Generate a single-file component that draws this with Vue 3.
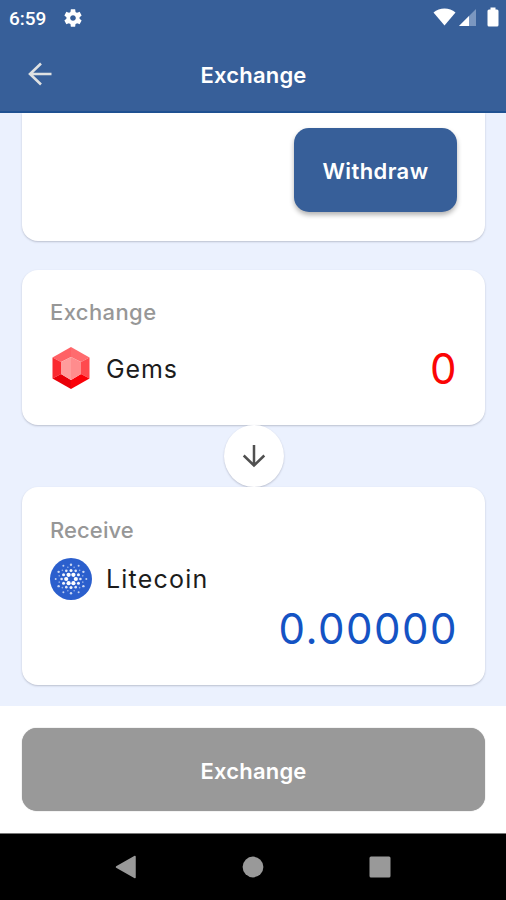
<template>
  <div class="screen">
    <header class="top">
      <div class="status-bar">
        <span class="clock">6:59</span>
        <svg class="gear" width="22" height="22" viewBox="0 0 24 24">
          <path fill="#fff" d="M19.14 12.94c.04-.3.06-.61.06-.94 0-.32-.02-.64-.07-.94l2.03-1.58c.18-.14.23-.41.12-.61l-1.92-3.32c-.12-.22-.37-.29-.59-.22l-2.39.96c-.5-.38-1.03-.7-1.62-.94l-.36-2.54c-.04-.24-.24-.41-.48-.41h-3.84c-.24 0-.43.17-.47.41l-.36 2.54c-.59.24-1.13.57-1.62.94l-2.39-.96c-.22-.08-.47 0-.59.22L2.74 8.87c-.12.21-.08.47.12.61l2.03 1.58c-.05.3-.09.63-.09.94s.02.64.07.94l-2.03 1.58c-.18.14-.23.41-.12.61l1.92 3.32c.12.22.37.29.59.22l2.39-.96c.5.38 1.03.7 1.62.94l.36 2.54c.05.24.24.41.48.41h3.84c.24 0 .44-.17.47-.41l.36-2.54c.59-.24 1.13-.56 1.62-.94l2.39.96c.22.08.47 0 .59-.22l1.92-3.32c.12-.22.07-.47-.12-.61l-2.01-1.58zM12 15.1c-1.71 0-3.1-1.39-3.1-3.1s1.39-3.1 3.1-3.1 3.1 1.39 3.1 3.1-1.39 3.1-3.1 3.1z"/>
        </svg>
        <div class="status-icons">
          <svg width="23" height="18" viewBox="0 0 23 18">
            <path d="M0.5 4.5C6.5-.8 16.5-.8 22.5 4.5L11.5 17.5z" fill="#fff"/>
          </svg>
          <svg width="17" height="17" viewBox="0 0 17 17">
            <path d="M0 17L17 0V17z" fill="#7b97c0"/>
            <path d="M0 17L10 7V17z" fill="#fff"/>
          </svg>
          <svg class="battery" width="12" height="20" viewBox="0 0 12 20">
            <path d="M3.500 0.500h5v2H10a1.500 1.500 0 0 1 1.500 1.500v14a1.500 1.500 0 0 1-1.500 1.500H2A1.500 1.500 0 0 1 0.500 18V4A1.500 1.500 0 0 1 2 2.500h1.500z" fill="#fff"/>
          </svg>
        </div>
      </div>
      <div class="toolbar">
        <button class="back">
          <svg width="24" height="24" viewBox="0 0 24 24" fill="none">
            <path d="M23.500 12H2M13 1.500L2 12l11 10.500" stroke="#dfe1e2" stroke-width="2.600"/>
          </svg>
        </button>
        <h1 class="bold-text">Exchange</h1>
      </div>
    </header>

    <main class="content">
      <section class="card card-withdraw">
        <button class="withdraw bold-text">Withdraw</button>
      </section>

      <section class="card card-from">
        <div class="label">Exchange</div>
        <div class="row">
          <svg class="coin gem" width="42" height="42" viewBox="0 0 42 42">
            <path d="M21 0L39.500 10.500 31 15 21 10z" fill="#ff6b6e"/>
            <path d="M21 0L2.500 10.500 11 15 21 10z" fill="#ff6165"/>
            <path d="M2.500 10.500L11 15V27L2.500 31.500z" fill="#fa2a30"/>
            <path d="M39.500 10.500L31 15V27L39.500 31.500z" fill="#ff4a4e"/>
            <path d="M2.500 31.500L11 27 21 33V42z" fill="#e90009"/>
            <path d="M39.500 31.500L31 27 21 33V42z" fill="#fa0008"/>
            <path d="M21 10L31 15V27L21 33z" fill="#ff8c8d"/>
            <path d="M21 10L11 15V27L21 33z" fill="#ff9c9c"/>
          </svg>
          <span class="name gems">Gems</span>
          <span class="amount from-amount">0</span>
        </div>
      </section>

      <div class="swap">
        <svg width="24" height="24" viewBox="0 0 24 24" fill="none">
          <path d="M12 1V21.500M1.700 11.500L12 21.500l10.300-10" stroke="#505050" stroke-width="2.500"/>
        </svg>
      </div>

      <section class="card card-to">
        <div class="label receive">Receive</div>
        <div class="row">
          <svg class="coin" width="42" height="42" viewBox="0 0 42 42">
            <circle cx="21" cy="21" r="21" fill="#2b5fcd"/>
            <circle v-for="(dot, i) in dots" :key="i" :cx="dot.x" :cy="dot.y" :r="dot.r" fill="#fff" :opacity="dot.opacity"/>
          </svg>
          <span class="name litecoin">Litecoin</span>
        </div>
        <div class="amount to-amount">0.00000</div>
      </section>
    </main>

    <footer class="action-bar">
      <button class="exchange bold-text">Exchange</button>
    </footer>

    <nav class="nav-bar">
      <svg width="22" height="24" viewBox="0 0 22 24">
        <path d="M1.500 12L20 1.500V22.500z" fill="#999" stroke="#999" stroke-width="1.500" stroke-linejoin="round"/>
      </svg>
      <svg width="22" height="22" viewBox="0 0 22 22">
        <circle cx="11" cy="11" r="10.400" fill="#999"/>
      </svg>
      <svg width="22" height="22" viewBox="0 0 22 22">
        <rect x="0.500" y="0.500" width="21" height="21" rx="1.500" fill="#999"/>
      </svg>
    </nav>
  </div>
</template>

<script setup>
// rings of the coin logo: count, distance from centre, dot size, start angle
const rings = [
  { count: 6, radius: 4.8, r: 2.1, start: 0, opacity: 1 },
  { count: 6, radius: 8.6, r: 1.5, start: 30, opacity: 0.95 },
  { count: 6, radius: 9.4, r: 1.3, start: 0, opacity: 0.85 },
  { count: 12, radius: 12.2, r: 0.8, start: 15, opacity: 0.5 },
  { count: 6, radius: 14.3, r: 1.2, start: 30, opacity: 0.75 },
  { count: 6, radius: 15.3, r: 1, start: 0, opacity: 0.7 }
]

const dots = rings.flatMap(ring =>
  Array.from({ length: ring.count }, (_, i) => {
    const angle = (ring.start + (360 / ring.count) * i) * Math.PI / 180
    return {
      x: 21 + ring.radius * Math.cos(angle),
      y: 21 + ring.radius * Math.sin(angle),
      r: ring.r,
      opacity: ring.opacity
    }
  })
)
</script>

<style>
body {
  margin: 0;
  background: #000;
}
</style>

<style scoped>
.screen {
  width: 506px;
  height: 900px;
  display: flex;
  flex-direction: column;
  overflow: hidden;
  background-color: #ebf1fe;
  font-family: Inter, sans-serif;
}

button {
  border: none;
  padding: 0;
  font-family: inherit;
}

.bold-text {
  font-family: Inter, sans-serif;
  font-size: 22px;
  font-weight: 600;
  line-height: 28px;
  letter-spacing: 0.2px;
  color: #fff;
}

.top {
  height: 113px;
  box-sizing: border-box;
  flex-shrink: 0;
  background-color: #375f99;
  border-bottom: 2px solid #1f5192;
}

.status-bar {
  height: 36px;
  display: flex;
  align-items: center;
  padding: 0 7px 0 9px;
}

.clock {
  width: 53px;
  font-family: Roboto, sans-serif;
  font-size: 19px;
  font-weight: 500;
  color: #fff;
}

.gear {
  margin-top: -1px;
}

.status-icons {
  margin-left: auto;
  display: flex;
  align-items: center;
  gap: 3px;
}

.status-icons svg {
  margin-top: -2px;
}

.battery {
  margin-left: 8px;
}

.toolbar {
  height: 76px;
  display: grid;
  grid-template-columns: 80px 1fr 80px;
  align-items: center;
}

.toolbar h1 {
  margin: 2px 0 0 1px;
  text-align: center;
}

.back {
  background: none;
  height: 24px;
  padding-left: 28px;
  text-align: left;
}

.back svg,
.coin {
  display: block;
}

.content {
  height: 593px;
  flex-shrink: 0;
  display: flex;
  flex-direction: column;
  padding: 0 21px 0 22px;
}

.card {
  box-sizing: border-box;
  background-color: #fff;
  border-radius: 16px;
  padding: 0 28px;
  box-shadow: 0 1px 2px rgba(60, 65, 85, 0.28);
}

.card-withdraw {
  height: 128px;
  border-radius: 0 0 16px 16px;
  display: flex;
  justify-content: flex-end;
  padding-top: 15px;
}

.withdraw {
  width: 163px;
  height: 84px;
  padding-top: 2px;
  border-radius: 15px;
  background-color: #375f99;
  letter-spacing: 0.4px;
  box-shadow: 0 3px 5px rgba(0, 0, 0, 0.3);
}

.card-from {
  height: 155px;
  margin-top: 29px;
  padding-top: 27px;
}

.label {
  font-size: 22px;
  font-weight: 500;
  line-height: 30px;
  letter-spacing: 0.4px;
  color: #979797;
}

.receive {
  letter-spacing: 0.1px;
}

.row {
  display: flex;
  align-items: center;
}

.card-from .row {
  height: 44px;
  margin-top: 20px;
}

.gem {
  margin-top: -2px;
}

.name {
  margin-left: 14px;
  font-size: 25px;
  line-height: 30px;
  color: #1c1c1c;
}

.gems {
  letter-spacing: 0.9px;
}

.litecoin {
  letter-spacing: 1.2px;
}

.amount {
  font-size: 42px;
  line-height: 50px;
  letter-spacing: 1.5px;
}

.from-amount {
  margin-left: auto;
  margin-right: -1px;
  color: #fb0505;
}

.swap {
  width: 60px;
  height: 62px;
  margin: 0 auto;
  border-radius: 50%;
  background-color: #fff;
  display: flex;
  align-items: center;
  justify-content: center;
  box-shadow: 0 1px 2px rgba(60, 65, 85, 0.28);
}

.card-to {
  height: 198px;
  padding-top: 28px;
}

.card-to .row {
  height: 42px;
  margin-top: 13px;
}

.to-amount {
  margin-top: 4px;
  margin-right: -1px;
  text-align: right;
  color: #1453c4;
}

.action-bar {
  height: 127px;
  flex-shrink: 0;
  box-sizing: border-box;
  padding: 22px 21px 0 22px;
  background-color: #fff;
}

.exchange {
  width: 100%;
  height: 83px;
  padding-top: 2px;
  border-radius: 15px;
  background-color: #999;
  box-shadow: 0 0 1px #888;
}

.nav-bar {
  height: 67px;
  flex-shrink: 0;
  box-sizing: border-box;
  display: flex;
  justify-content: space-between;
  align-items: center;
  padding: 0 115px;
  background-color: #000;
  border-top: 1px solid #777;
}
</style>
